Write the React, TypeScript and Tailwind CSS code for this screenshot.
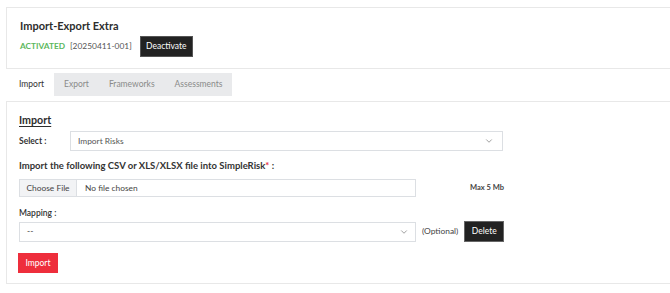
import { ChevronDown } from 'lucide-react';

const tabs = ['Import', 'Export', 'Frameworks', 'Assessments'];

export default function App() {
  return (
    <div className="w-[670px] h-[293px] overflow-hidden bg-white pl-[6px] pt-[7px] font-['Lato','Liberation_Sans',sans-serif] text-[#333]">
      <div className="w-[700px] border border-[#e8e8e8] pl-[13px] pt-[10px] pb-[11px]">
        <div className="text-[11px] leading-[16px] font-bold text-[#2d2d2d]">Import-Export Extra</div>
        <div className="mt-[2px] flex items-center">
          <span className="text-[8.3px] font-bold text-[#5cb85c]">ACTIVATED</span>
          <span className="ml-[5px] text-[8.4px] text-[#555]">[20250411-001]</span>
          <button className="ml-[8px] h-[21px] w-[53px] bg-[#222] border border-[#555] text-white text-[8.5px]">
            Deactivate
          </button>
        </div>
      </div>

      <div className="mt-[4px] flex h-[23px] pl-[3px]">
        {tabs.map((t, i) => (
          <div
            key={t}
            className={
              i === 0
                ? 'flex items-center px-[10px] bg-white text-[8.5px] text-[#333]'
                : 'flex items-center px-[10px] bg-[#e9eaec] text-[8.5px] text-[#8a8a8a]'
            }
          >
            {t}
          </div>
        ))}
      </div>

      <div className="mt-[5px] w-[700px] border border-[#e8e8e8] pl-[12px] pt-[10px] pb-[10px]">
        <div className="text-[10.7px] leading-[16px] font-bold text-[#2d2d2d] underline underline-offset-2">Import</div>

        <div className="mt-[3px] flex items-center">
          <span className="w-[51px] text-[8.5px] font-bold text-[#333]">Select :</span>
          <div className="flex h-[20px] w-[433px] items-center justify-between border border-[#dcdfe3] pl-[7px] pr-[8px]">
            <span className="text-[8.4px] text-[#555]">Import Risks</span>
            <ChevronDown className="h-[10px] w-[10px] text-[#666]" strokeWidth={1.5} />
          </div>
        </div>

        <div className="mt-[8px] text-[9.5px] leading-[14px] font-bold text-[#333]">
          Import the following CSV or XLS/XLSX file into SimpleRisk<span className="text-[#e8303d]">*</span> :
        </div>

        <div className="mt-[6px] flex items-center">
          <div className="flex h-[18px] w-[397px] items-center border border-[#dcdfe3]">
            <div className="flex h-full w-[57px] items-center justify-center border-r border-[#dcdfe3] bg-[#f2f3f5] text-[8.4px] text-[#444]">
              Choose File
            </div>
            <span className="ml-[8px] text-[8.4px] text-[#444]">No file chosen</span>
          </div>
          <span className="ml-[54px] text-[7.5px] font-bold text-[#444]">Max 5 Mb</span>
        </div>

        <div className="mt-[9px] text-[8.5px] leading-[14px] font-semibold text-[#333]">Mapping :</div>

        <div className="mt-[1px] flex items-center">
          <div className="flex h-[20px] w-[397px] items-center justify-between border border-[#dcdfe3] pl-[7px] pr-[6px]">
            <span className="text-[8.5px] text-[#555]">--</span>
            <ChevronDown className="h-[10px] w-[10px] text-[#666]" strokeWidth={1.5} />
          </div>
          <span className="ml-[6px] text-[8.4px] text-[#444]">(Optional)</span>
          <button className="ml-[6px] h-[21px] w-[40px] bg-[#222] border border-[#666] text-white text-[8.5px]">
            Delete
          </button>
        </div>

        <button className="mt-[11px] -ml-[1px] h-[20px] w-[40px] bg-[#ee2e3c] text-white text-[8.5px]">
          Import
        </button>
      </div>
    </div>
  );
}
